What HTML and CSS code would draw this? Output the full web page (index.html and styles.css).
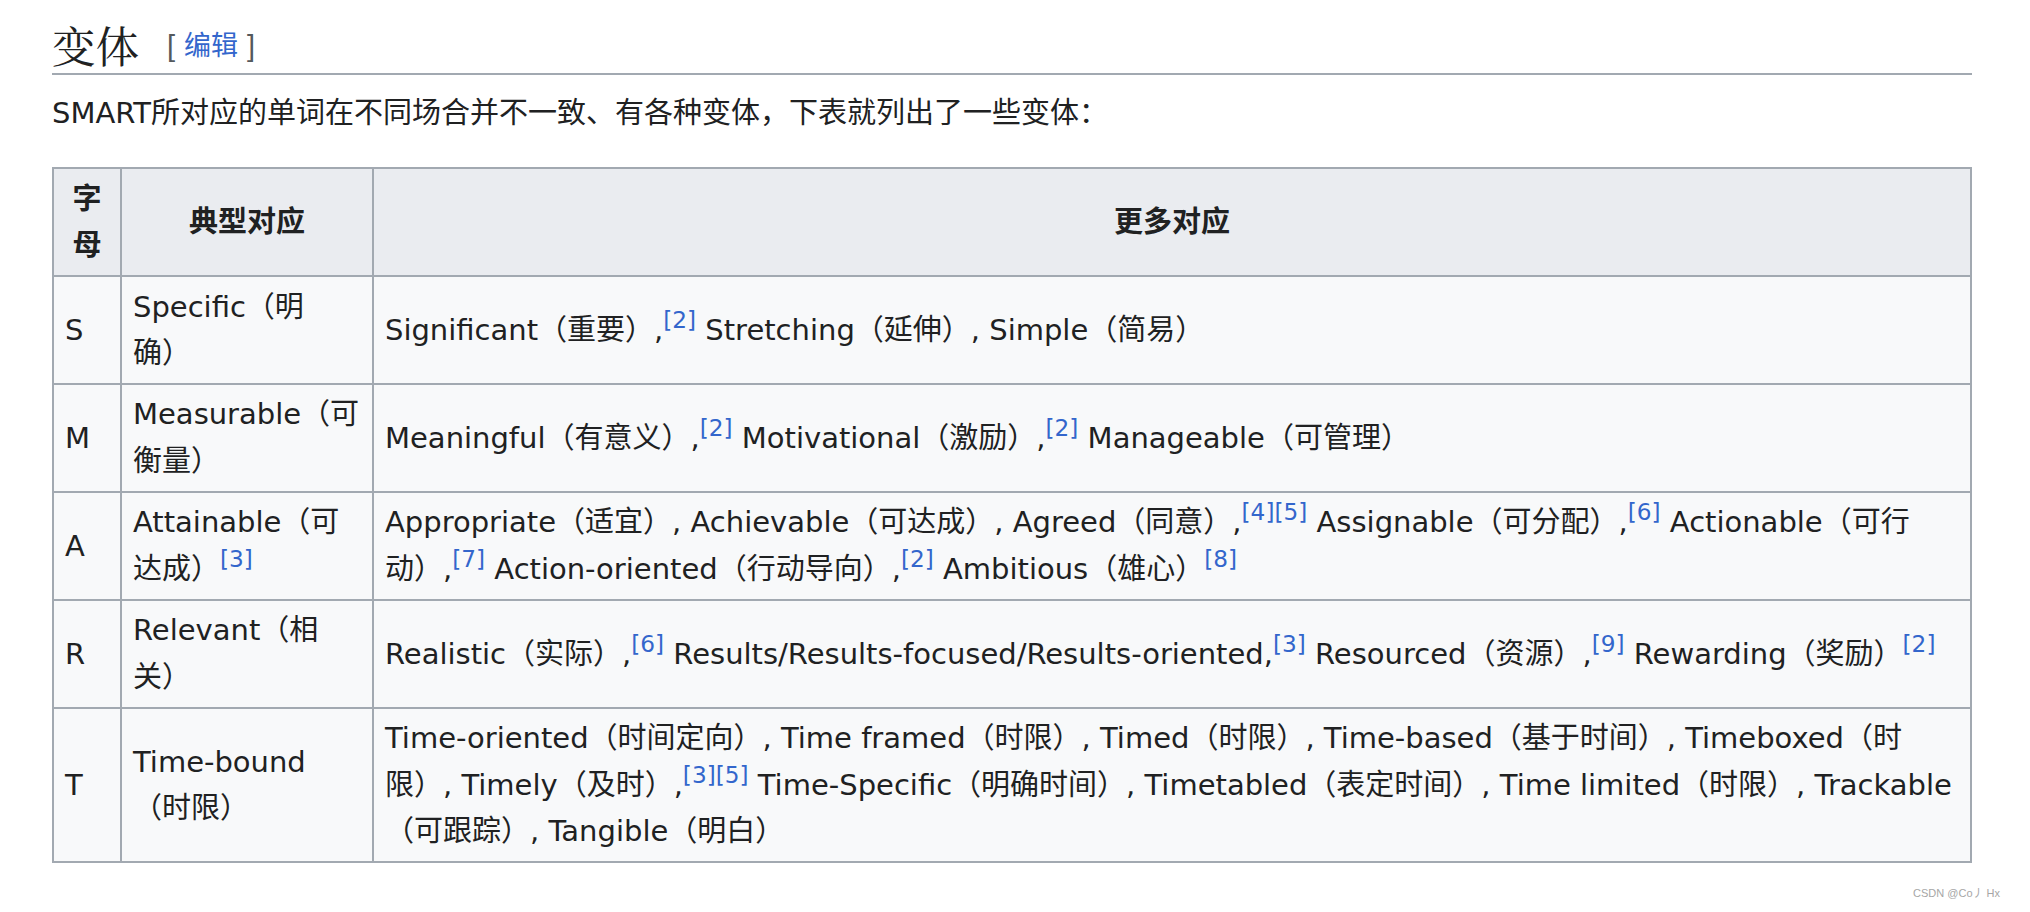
FILE: index.html
```html
<!DOCTYPE html>
<html lang="zh-CN">
<head>
<meta charset="utf-8">
<title>变体</title>
<link rel="stylesheet" href="styles.css">
</head>
<body>
<div class="content">
  <h2 class="heading"><span class="headline">变体</span><span class="editsection"><span class="bracket">[</span><a href="#">编辑</a><span class="bracket">]</span></span></h2>
  <p class="intro">SMART所对应的单词在不同场合并不一致、有各种变体，下表就列出了一些变体：</p>
  <table class="wikitable">
    <colgroup>
      <col class="col-letter">
      <col class="col-typical">
      <col class="col-more">
    </colgroup>
    <thead>
      <tr>
        <th>字母</th>
        <th>典型对应</th>
        <th>更多对应</th>
      </tr>
    </thead>
    <tbody>
      <tr>
        <td>S</td>
        <td>Specific（明确）</td>
        <td>Significant（重要）,<sup class="ref"><a href="#">[2]</a></sup> Stretching（延伸）, Simple（简易）</td>
      </tr>
      <tr>
        <td>M</td>
        <td>Measurable（可衡量）</td>
        <td>Meaningful（有意义）,<sup class="ref"><a href="#">[2]</a></sup> Motivational（激励）,<sup class="ref"><a href="#">[2]</a></sup> Manageable（可管理）</td>
      </tr>
      <tr>
        <td>A</td>
        <td>Attainable（可达成）<sup class="ref"><a href="#">[3]</a></sup></td>
        <td>Appropriate（适宜）, Achievable（可达成）, Agreed（同意）,<sup class="ref"><a href="#">[4]</a><a href="#">[5]</a></sup> Assignable（可分配）,<sup class="ref"><a href="#">[6]</a></sup> Actionable（可行动）,<sup class="ref"><a href="#">[7]</a></sup> Action-oriented（行动导向）,<sup class="ref"><a href="#">[2]</a></sup> Ambitious（雄心）<sup class="ref"><a href="#">[8]</a></sup></td>
      </tr>
      <tr>
        <td>R</td>
        <td>Relevant（相关）</td>
        <td>Realistic（实际）,<sup class="ref"><a href="#">[6]</a></sup> Results/Results-focused/Results-oriented,<sup class="ref"><a href="#">[3]</a></sup> Resourced（资源）,<sup class="ref"><a href="#">[9]</a></sup> Rewarding（奖励）<sup class="ref"><a href="#">[2]</a></sup></td>
      </tr>
      <tr>
        <td>T</td>
        <td>Time-bound（时限）</td>
        <td>Time-oriented（时间定向）, Time framed（时限）, Timed（时限）, Time-based（基于时间）, Timeboxed（时限）, Timely（及时）,<sup class="ref"><a href="#">[3]</a><a href="#">[5]</a></sup> Time-Specific（明确时间）, Timetabled（表定时间）, Time limited（时限）, Trackable（可跟踪）, Tangible（明白）</td>
      </tr>
    </tbody>
  </table>
</div>
<div class="watermark">CSDN @Co丿 Hx</div>
</body>
</html>
```

FILE: styles.css
```css
html, body {
  margin: 0;
  padding: 0;
  background: #ffffff;
}

body {
  position: relative;
  width: 2030px;
  height: 912px;
  overflow: hidden;
  color: #202122;
  font-family: "DejaVu Sans", "Noto Sans CJK SC", sans-serif;
  font-size: 29px;
  line-height: 1.6;
  text-spacing-trim: space-all;
}

.content {
  padding: 16px 0 0 52px;
  width: 1920px;
}

.heading {
  margin: 0;
  font-weight: normal;
  font-size: 43.5px;
  line-height: 1.3;
  border-bottom: 2px solid #a2a9b1;
  display: flex;
  align-items: center;
}

.headline {
  font-family: "Noto Serif CJK SC", "Liberation Serif", "Noto Sans CJK SC", serif;
}

.editsection {
  margin-left: 28px;
  padding-top: 5px;
  font-family: "Liberation Sans", "Noto Sans CJK SC", sans-serif;
  font-size: 27px;
  line-height: 1;
  display: flex;
  gap: 9px;
  align-items: center;
}

.editsection .bracket {
  color: #54595d;
  font-size: 29px;
}

.editsection a {
  color: #3366cc;
  text-decoration: none;
}

.intro {
  margin: 15px 0 0 0;
}

.wikitable {
  margin-top: 31px;
  width: 1920px;
  table-layout: fixed;
  border-collapse: collapse;
  border: 2px solid #a2a9b1;
  background: #f8f9fa;
  color: #202122;
}

.col-letter { width: 68px; }
.col-typical { width: 252px; }

.wikitable th,
.wikitable td {
  border: 2px solid #a2a9b1;
  padding: 6.6px 11px;
  vertical-align: middle;
}

.wikitable th {
  background: #eaecf0;
  font-weight: bold;
  text-align: center;
}

.wikitable td {
  text-align: left;
}

.ref {
  font-size: 80%;
  line-height: 1;
  vertical-align: 12px;
}

.ref a {
  color: #3366cc;
  text-decoration: none;
}

.watermark {
  position: absolute;
  right: 30px;
  bottom: 13px;
  font-family: "Liberation Sans", "Noto Sans CJK SC", sans-serif;
  font-size: 11px;
  line-height: 1;
  color: #a6a6a6;
}
```
